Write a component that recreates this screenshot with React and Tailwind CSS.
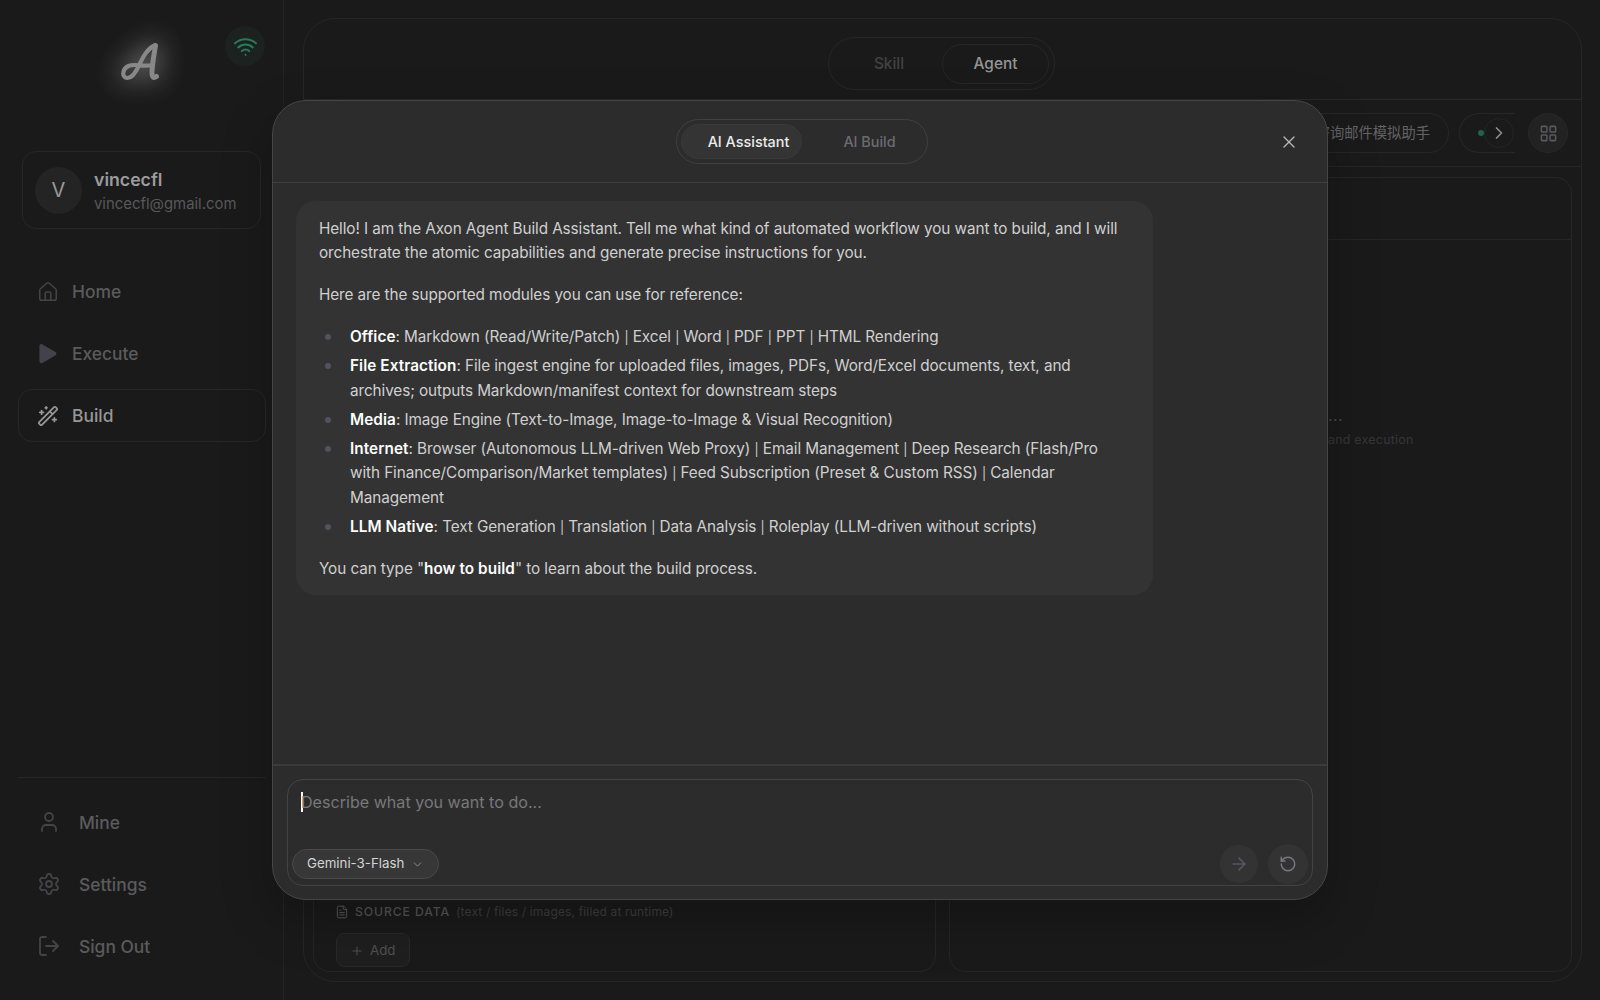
import React, { useState } from 'react';
import {
  ArrowRight,
  ChevronDown,
  ChevronRight,
  FileText,
  House,
  LayoutGrid,
  LogOut,
  Plus,
  RotateCcw,
  Settings,
  User,
  WandSparkles,
  Wifi,
  X,
} from 'lucide-react';

const modules = [
  { name: 'Office', text: 'Markdown (Read/Write/Patch) | Excel | Word | PDF | PPT | HTML Rendering' },
  {
    name: 'File Extraction',
    text: 'File ingest engine for uploaded files, images, PDFs, Word/Excel documents, text, and archives; outputs Markdown/manifest context for downstream steps',
  },
  { name: 'Media', text: 'Image Engine (Text-to-Image, Image-to-Image & Visual Recognition)' },
  {
    name: 'Internet',
    text: 'Browser (Autonomous LLM-driven Web Proxy) | Email Management | Deep Research (Flash/Pro with Finance/Comparison/Market templates) | Feed Subscription (Preset & Custom RSS) | Calendar Management',
  },
  { name: 'LLM Native', text: 'Text Generation | Translation | Data Analysis | Roleplay (LLM-driven without scripts)' },
];

function PlayIcon() {
  return (
    <svg width="22" height="22" viewBox="0 0 22 22" fill="#42424c">
      <path d="M2.400 3.200C2.400 1.500 4 .6 5.400 1.400l12.800 7.300c1.600.9 1.600 3 0 3.900L5.400 19.900C4 20.700 2.400 19.800 2.400 18.100z" />
    </svg>
  );
}

function Logo() {
  return (
    <svg
      width="48"
      height="48"
      viewBox="0 0 48 48"
      fill="none"
      stroke="#888888"
      strokeLinecap="round"
      strokeLinejoin="round"
      className="overflow-visible drop-shadow-[0_0_14px_rgba(255,255,255,0.7)]"
    >
      <path d="M37.5 6.5C30 10 26 18 22 26.5c-3 6.5-6.500 12.500-11.500 12.500-6 0-5.500-9 1-12 7-3 13.500 1.500 24-1" strokeWidth="4.2" />
      <path d="M38.500 6.500c-1.500 9-3.500 20-3.500 26.500 0 5.500 1.500 6.500 4.500 4.500" strokeWidth="5" />
    </svg>
  );
}

function NavItem({ icon, label, active }) {
  return (
    <div
      className={`flex h-[53px] items-center gap-[13px] rounded-[14px] border pl-[18px] text-[17.4px] font-medium ${
        active ? 'border-[#272727] text-[#979797]' : 'border-transparent text-[#5b5b5d]'
      }`}
    >
      {icon}
      <span className="pt-[2px]">{label}</span>
    </div>
  );
}

function FooterItem({ icon, label }) {
  return (
    <div className="flex h-[54px] items-center gap-[18px] pl-[19px] text-[17.4px] font-medium text-[#5b5b5d]">
      {icon}
      <span className="pt-[2px]">{label}</span>
    </div>
  );
}

function Sidebar() {
  return (
    <aside className="flex h-full w-[284px] shrink-0 flex-col border-r border-[#232323] pr-[17px] pl-[18px]">
      <div className="flex h-[151px] justify-between pl-[99px]">
        <div className="pt-[39px]">
          <Logo />
        </div>
        <div className="mt-[26px] mr-px flex size-10 items-center justify-center rounded-full bg-[#1b221f]">
          <Wifi size={25} strokeWidth={2} color="#27795a" />
        </div>
      </div>

      <div className="mr-[5px] ml-1 flex h-[78px] shrink-0 items-center gap-3 rounded-[14px] border border-[#272727] pl-3">
        <div className="flex size-[47px] items-center justify-center rounded-full bg-[#242424] text-[20px] text-[#9a9a9a]">V</div>
        <div className="pt-[2px]">
          <p className="text-[17.7px] leading-[25px] font-semibold text-[#9c9c9c]">vincecfl</p>
          <p className="text-[14.9px] leading-[24px] text-[#58585b]">vincecfl@gmail.com</p>
        </div>
      </div>

      <nav className="mt-9 flex flex-col gap-[9px]">
        <NavItem icon={<House size={22} strokeWidth={1.7} color="#444447" />} label="Home" />
        <NavItem icon={<PlayIcon />} label="Execute" />
        <NavItem icon={<WandSparkles size={22} strokeWidth={1.9} color="#979797" />} label="Build" active />
      </nav>

      <div className="mt-auto mb-[27px] flex flex-col gap-2 border-t border-[#262626] pt-[17px]">
        <FooterItem icon={<User size={24} strokeWidth={1.8} color="#444447" />} label="Mine" />
        <FooterItem icon={<Settings size={24} strokeWidth={1.8} color="#444447" />} label="Settings" />
        <FooterItem icon={<LogOut size={24} strokeWidth={1.8} color="#444447" />} label="Sign Out" />
      </div>
    </aside>
  );
}

function Workspace() {
  return (
    <main className="flex min-w-0 flex-1 pt-[18px] pr-[18px] pb-[18px] pl-[19px]">
      <div className="flex flex-1 flex-col overflow-hidden rounded-[32px] border border-[#262626]">
        <div className="flex h-[81px] shrink-0 justify-center border-b border-[#282828] pt-[18px]">
          <div className="-ml-[2px] flex h-[53px] w-[227px] items-center rounded-full border border-[#272727] p-[5px] text-[15.4px] font-medium">
            <span className="flex-1 pl-[2px] text-center text-[#424244]">Skill</span>
            <span className="flex h-10 w-[107px] items-center justify-center rounded-full border border-[#272727] text-[#959595]">
              Agent
            </span>
          </div>
        </div>

        <div className="flex h-[67px] shrink-0 items-center justify-end border-b border-[#262626] pr-[13px]">
          <div className="relative flex w-[300px] justify-end gap-[10px] overflow-hidden">
            <div className="flex h-10 shrink-0 items-center rounded-full border border-[#272727] pr-[18px] pl-6 text-[14.3px] text-[#636366]">
              咨询邮件模拟助手
            </div>
            <div className="flex h-10 w-[56px] shrink-0 items-center rounded-l-full border border-r-0 border-[#272727] pl-[18px]">
              <span className="size-[6px] rounded-full bg-[#22624a]" />
            </div>
            <div className="absolute top-[5px] right-[1px] flex size-[30px] items-center justify-center rounded-full border border-[#252525] bg-[#1a1a1a]">
              <ChevronRight size={20} strokeWidth={2} color="#8d8d8d" />
            </div>
          </div>
          <div className="ml-[13px] flex size-10 items-center justify-center rounded-full border border-[#282828] bg-[#222222]">
            <LayoutGrid size={19} strokeWidth={1.9} color="#5a5a5d" />
          </div>
        </div>

        <div className="flex min-h-0 flex-1 gap-[13px] p-[9px] pt-[10px]">
          <section className="flex w-[623px] shrink-0 flex-col justify-end rounded-2xl border border-[#262626] pb-1 pl-[22px]">
            <div className="flex items-center">
              <FileText size={14} strokeWidth={1.7} color="#5a5a5c" className="-ml-px" />
              <span className="ml-[6px] text-[12.2px] font-medium tracking-[0.9px] text-[#555557]">SOURCE DATA</span>
              <span className="ml-[6px] text-[12px] tracking-[0.15px] text-[#3e3e40]">(text / files / images, filled at runtime)</span>
            </div>
            <button className="mt-[12px] flex h-[34px] w-[74px] items-center gap-[6px] rounded-lg border border-[#292929] bg-[#1f1f1f] pt-px pl-[13px] text-[13.3px] text-[#515153]">
              <Plus size={14} strokeWidth={1.7} />
              Add
            </button>
          </section>
          <section className="flex flex-1 flex-col rounded-2xl border border-[#262626]">
            <div className="h-[62px] border-b border-[#262626]" />
            <div className="mt-[162px] pl-[378px] text-[#48484a]">
              <p className="text-[16px] leading-[26px] tracking-[0.4px]">...</p>
              <p className="mt-[2px] text-[12.5px] leading-[20px] tracking-[0.2px] text-[#363638]">and execution</p>
            </div>
          </section>
        </div>
      </div>
    </main>
  );
}

// the separators are set a little smaller than the running text
function ModuleText({ text }) {
  return text.split('|').map((part, i) => (
    <React.Fragment key={i}>
      {i > 0 && <span className="text-[12.5px] leading-none">|</span>}
      {part}
    </React.Fragment>
  ));
}

function AssistantMessage() {
  return (
    <div className="w-[857px] rounded-[20px] bg-[#333333] px-[23px] pt-[15.5px] pb-[13.5px] text-[15.3px] leading-[24.5px] tracking-[-0.085px] text-[#d0d0d0]">
      <p>
        Hello! I am the Axon Agent Build Assistant. Tell me what kind of automated workflow you want to build, and I will
        orchestrate the atomic capabilities and generate precise instructions for you.
      </p>
      <p className="mt-[17.5px]">Here are the supported modules you can use for reference:</p>
      <ul className="mt-[17.5px] space-y-[4.5px]">
        {modules.map((m) => (
          <li key={m.name} className="flex">
            <span className="mt-[9px] mr-[19px] ml-[6px] size-[6px] shrink-0 rounded-full bg-[#52525e]" />
            <span>
              <strong className="font-semibold tracking-[0.08px] text-white">{m.name}</strong>: <ModuleText text={m.text} />
            </span>
          </li>
        ))}
      </ul>
      <p className="mt-[17.5px]">
        You can type "<strong className="font-semibold tracking-[0.08px] text-white">how to build</strong>" to learn about
        the build process.
      </p>
    </div>
  );
}

function AssistantDialog() {
  const [tab, setTab] = useState('assistant');

  return (
    <div className="absolute inset-0 flex items-center justify-center">
      <div className="flex h-[800px] w-[1056px] flex-col overflow-hidden rounded-[34px] border border-[#454545] bg-[#2c2c2c] shadow-[0_20px_50px_rgba(0,0,0,0.25)]">
        <header className="grid h-[82px] shrink-0 grid-cols-[1fr_auto_1fr] items-center border-b border-[#3e3e3e]">
          <div />
          <div className="ml-[4px] flex h-[45px] w-[252px] items-center rounded-full border border-[#404040] py-[5px] pr-[5px] pl-1 text-[14.4px] font-medium">
            <button
              onClick={() => setTab('assistant')}
              className={`h-[35px] w-[121px] rounded-full border pt-px pl-[14px] whitespace-nowrap ${
                tab === 'assistant' ? 'border-[#393939] bg-[#343434] text-[#ececec]' : 'border-transparent text-[#6b6b74]'
              }`}
            >
              AI Assistant
            </button>
            <button
              onClick={() => setTab('build')}
              className={`h-[35px] flex-1 rounded-full border pt-px pl-[15px] ${
                tab === 'build' ? 'border-[#393939] bg-[#343434] text-[#ececec]' : 'border-transparent text-[#6b6b74]'
              }`}
            >
              AI Build
            </button>
          </div>
          <button className="mr-[28px] justify-self-end">
            <X size={20} strokeWidth={1.6} color="#b9b9b9" />
          </button>
        </header>

        <div className="min-h-0 flex-1 pt-[18px] pl-[23px]">
          <AssistantMessage />
        </div>

        <footer className="h-[135px] shrink-0 border-t-2 border-[#3a3a3a] px-[14px] pt-[13px]">
          <div className="flex h-[107px] flex-col justify-between rounded-[16px] border border-[#434343] pt-[11px] pb-px pl-1">
            <div className="flex h-[21px] items-center pl-[9px] text-[16.1px] text-[#78787a]">
              <span className="-mr-[2px] h-5 w-[2px] bg-white" />
              <span className="pt-px">Describe what you want to do...</span>
            </div>
            <div className="flex h-10 items-center justify-between pr-[4px]">
              <button className="flex h-[30px] w-[147px] items-center gap-[7px] rounded-full border border-[#4a4a4a] bg-[#373737] pl-[14px] text-[13.3px] text-[#d4d4d4]">
                Gemini-3-Flash
                <ChevronDown size={13} strokeWidth={1.8} color="#8c8c8c" />
              </button>
              <div className="flex items-center gap-[10px]">
                <button className="flex size-[38px] items-center justify-center rounded-full bg-[#333333]">
                  <ArrowRight size={20} strokeWidth={2} color="#565664" />
                </button>
                <button className="flex size-10 items-center justify-center rounded-full bg-[#333333]">
                  <RotateCcw size={18} strokeWidth={1.9} color="#79797d" />
                </button>
              </div>
            </div>
          </div>
        </footer>
      </div>
    </div>
  );
}

export default function App() {
  return (
    <div className="relative flex h-[1000px] w-[1600px] overflow-hidden bg-[#1a1a1a] font-['Inter','Noto_Sans_CJK_SC',sans-serif]">
      <Sidebar />
      <Workspace />
      <AssistantDialog />
    </div>
  );
}
